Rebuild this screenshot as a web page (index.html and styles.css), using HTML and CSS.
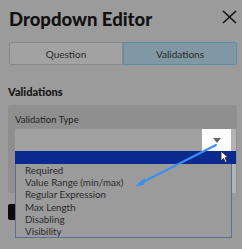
FILE: index.html
```html
<!DOCTYPE html>
<html lang="en">
<head>
    <meta charset="UTF-8">
    <meta name="viewport" content="width=device-width, initial-scale=1.0">
    <title>Dropdown Editor</title>
    <link rel="stylesheet" href="styles.css">
</head>
<body>
    <div class="modal">
        <div class="header">
            <h1>Dropdown Editor</h1>
            <svg class="close" width="15" height="14" viewBox="0 0 15 14">
                <path d="M1 1 L14 13 M14 1 L1 13" stroke="#111" stroke-width="1.6" fill="none"/>
            </svg>
        </div>
        <div class="tabs">
            <div class="tab">Question</div>
            <div class="tab active">Validations</div>
        </div>
        <h2>Validations</h2>
        <div class="panel">
            <div class="label">Validation Type</div>
            <div class="select">
                <div class="select-value"></div>
                <div class="select-arrow">
                    <svg width="8" height="5" viewBox="0 0 8 5"><path d="M0 0 H8 L4 5 Z" fill="#666"/></svg>
                </div>
            </div>
            <div class="scroll-strip"></div>
        </div>
        <div class="save-btn"></div>

        <div class="menu">
            <div class="menu-active"></div>
            <div class="menu-item">Required</div>
            <div class="menu-item">Value Range (min/max)</div>
            <div class="menu-item">Regular Expression</div>
            <div class="menu-item">Max Length</div>
            <div class="menu-item">Disabling</div>
            <div class="menu-item">Visibility</div>
        </div>

        <svg class="pointer-arrow" width="242" height="249" viewBox="0 0 242 249">
            <path d="M216 145 L139 184" stroke="#3a8ff0" stroke-width="2" stroke-linecap="round"/>
            <path d="M135 186 L145 178 L144 185 Z" fill="#3a8ff0"/>
            <path d="M221 151 L221 161 L223.5 158.5 L225.5 162.5 L227 161.7 L225 157.8 L228 157.5 Z" fill="#fff" stroke="#222" stroke-width="0.8" stroke-linejoin="round"/>
        </svg>
    </div>
</body>
</html>
```

FILE: styles.css
```css
body{
    margin:0;
    background-color:#9b9b9b;
    font-family: Lato, "Open Sans", Arial, sans-serif;
    color:#1a1a1a;
}
.modal{
    position:relative;
    width:242px;
    height:249px;
    padding:0 5px 0 8px;
    box-sizing:border-box;
}
.header{
    display:flex;
    justify-content:space-between;
    align-items:flex-start;
    padding-top:8px;
}
h1{
    margin:0;
    font-size:18.5px;
    line-height:22px;
    font-weight:900;
    color:#111;
    padding-left:1px;
}
.close{
    margin-top:2px;
}
.tabs{
    display:grid;
    grid-template-columns:1fr 1fr;
    margin-top:12px;
    margin-left:1px;
}
.tab{
    height:23px;
    box-sizing:border-box;
    display:flex;
    justify-content:center;
    align-items:center;
    font-size:10px;
    color:#2a2a2a;
    background-color:#a2a2a2;
    border:1px solid #888;
    border-radius:2px 0 0 2px;
}
.tab.active{
    background-color:#7f98a4;
    border-color:#5b8ea8;
    border-radius:0 2px 2px 0;
}
h2{
    margin:20px 0 0 0;
    font-size:11px;
    line-height:14px;
    font-weight:900;
    color:#151515;
}
.panel{
    position:relative;
    margin-top:6px;
    height:88px;
    background-color:#8f8f8f;
    border-radius:3px;
    padding:8px 1px 0 7px;
    box-sizing:border-box;
}
.label{
    font-size:9.5px;
    line-height:14px;
    color:#222;
}
.select{
    display:flex;
    margin-top:2px;
    margin-right:5px;
    height:23px;
}
.select-value{
    flex:1;
    background-color:#a1a1a1;
}
.select-arrow{
    width:29px;
    background-color:#fdfdfd;
    display:flex;
    justify-content:center;
    align-items:center;
}
.scroll-strip{
    position:absolute;
    right:1px;
    top:24px;
    bottom:0;
    width:5px;
    background-color:#b3b3b3;
}
.save-btn{
    margin-top:11px;
    width:10px;
    height:16px;
    background-color:#0b0b0b;
    border-radius:2px 0 0 2px;
}
.menu{
    position:absolute;
    left:15px;
    top:151px;
    width:217px;
    height:87px;
    box-sizing:border-box;
    border:1px solid #5d6f96;
    border-top:none;
    background-color:#9b9b9b;
}
.menu-active{
    height:13px;
    margin:0 -5px 0 -1px;
    background-color:#0a2a8f;
}
.menu-item{
    padding-left:9px;
    font-size:9.8px;
    line-height:12.2px;
    color:#2b2b2b;
}
.pointer-arrow{
    position:absolute;
    left:0;
    top:0;
}
```
